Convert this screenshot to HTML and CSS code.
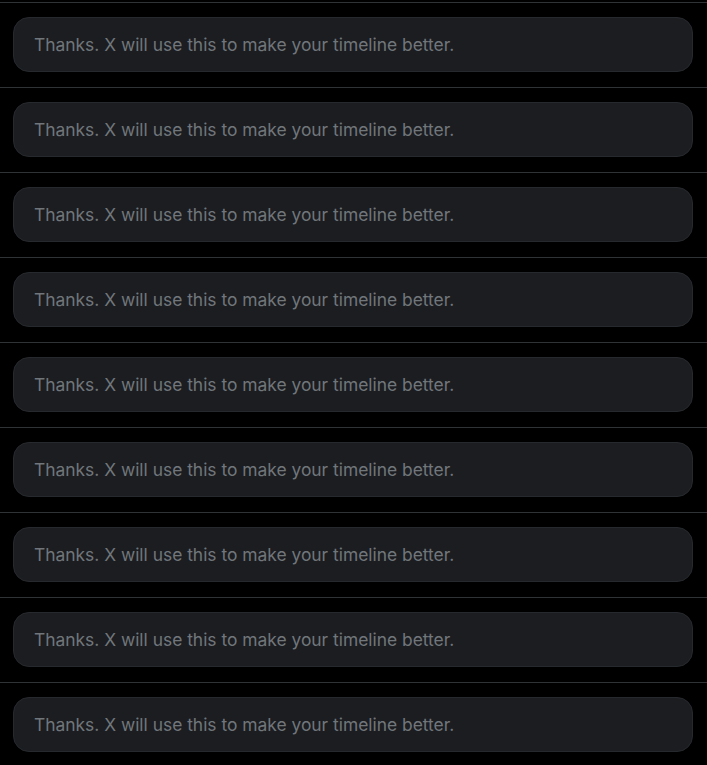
FILE: index.html
```html
<!DOCTYPE html>
<html lang="en">
<head>
    <meta charset="UTF-8">
    <meta name="viewport" content="width=device-width, initial-scale=1.0">
    <title>Timeline feedback</title>
    <link rel="stylesheet" href="styles.css">
</head>
<body>

<div class="feed">
    <div class="row"><div class="notice">Thanks. X will use this to make your timeline better.</div></div>
    <div class="row"><div class="notice">Thanks. X will use this to make your timeline better.</div></div>
    <div class="row"><div class="notice">Thanks. X will use this to make your timeline better.</div></div>
    <div class="row"><div class="notice">Thanks. X will use this to make your timeline better.</div></div>
    <div class="row"><div class="notice">Thanks. X will use this to make your timeline better.</div></div>
    <div class="row"><div class="notice">Thanks. X will use this to make your timeline better.</div></div>
    <div class="row"><div class="notice">Thanks. X will use this to make your timeline better.</div></div>
    <div class="row"><div class="notice">Thanks. X will use this to make your timeline better.</div></div>
    <div class="row"><div class="notice">Thanks. X will use this to make your timeline better.</div></div>
</div>

</body>
</html>
```

FILE: styles.css
```css
* {
    margin: 0;
    padding: 0;
    box-sizing: border-box;
}
body {
    background-color: #000;
    font-family: Inter, "Noto Sans", sans-serif;
}
.feed {
    padding-top: 2px;
}
.row {
    border-top: 1px solid #2f3336;
    padding: 14px 14px 15px 13px;
}
.notice {
    height: 55px;
    display: flex;
    align-items: center;
    padding: 0 20px;
    background-color: #1b1d21;
    border: 1px solid #26292d;
    border-radius: 16px;
    color: #71767b;
    font-size: 17.4px;
}
```
